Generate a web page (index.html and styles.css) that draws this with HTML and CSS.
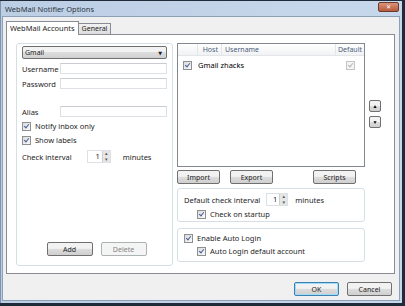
FILE: index.html
```html
<!DOCTYPE html>
<html lang="en">
<head>
  <meta charset="UTF-8">
  <title>WebMail Notifier Options</title>
  <link rel="stylesheet" href="styles.css">
</head>
<body>
  <div class="window">
    <div class="titlebar">
      <span class="title">WebMail Notifier Options</span>
      <span class="close">&#x2715;</span>
    </div>
    <div class="client">
      <div class="tabs">
        <span class="tab active">WebMail Accounts</span>
        <span class="tab">General</span>
      </div>
      <div class="panel">
        <!-- account editor -->
        <div class="group left">
          <div class="combo"><span>Gmail</span><span class="arrow">&#9660;</span></div>
          <div class="field"><label>Username</label><span class="input"></span></div>
          <div class="field"><label>Password</label><span class="input"></span></div>
          <div class="field alias"><label>Alias</label><span class="input"></span></div>
          <div class="check"><span class="cb on"></span>Notify inbox only</div>
          <div class="check"><span class="cb on"></span>Show labels</div>
          <div class="interval">
            <span>Check interval</span>
            <span class="spin"><span class="val">1</span><span class="arrows"><i>&#9652;</i><i>&#9662;</i></span></span>
            <span>minutes</span>
          </div>
          <div class="left-buttons">
            <button class="btn">Add</button>
            <button class="btn disabled">Delete</button>
          </div>
        </div>

        <!-- account list -->
        <div class="right">
          <div class="list-row">
            <div class="list">
              <div class="head">
                <span class="c0"></span>
                <span class="c1">Host</span>
                <span class="c2">Username</span>
                <span class="c3">Default</span>
              </div>
              <div class="item">
                <span class="c0"><span class="cb on"></span></span>
                <span class="name">Gmail zhacks</span>
                <span class="c3"><span class="cb on grey"></span></span>
              </div>
            </div>
            <div class="movers">
              <button class="mv">&#9650;</button>
              <button class="mv">&#9660;</button>
            </div>
          </div>
          <div class="io">
            <button class="btn">Import</button>
            <button class="btn">Export</button>
            <button class="btn scripts">Scripts</button>
          </div>
          <div class="group box">
            <div class="interval">
              <span>Default check interval</span>
              <span class="spin"><span class="val">1</span><span class="arrows"><i>&#9652;</i><i>&#9662;</i></span></span>
              <span>minutes</span>
            </div>
            <div class="check sub"><span class="cb on"></span>Check on startup</div>
          </div>
          <div class="group box">
            <div class="check"><span class="cb on"></span>Enable Auto Login</div>
            <div class="check sub"><span class="cb on"></span>Auto Login default account</div>
          </div>
        </div>
      </div>
      <div class="footer">
        <button class="btn ok">OK</button>
        <button class="btn">Cancel</button>
      </div>
    </div>
  </div>
</body>
</html>
```

FILE: styles.css
```css
body {
  margin: 0;
  background: #1f2b3b;
  font-family: 'Noto Sans', 'DejaVu Sans', sans-serif;
  font-size: 7.5px;
  color: #1e1e1e;
}
.window {
  width: 401px;
  height: 302px;
  margin-top: 1px;
  background: linear-gradient(to right, #bccee4, #c8d8ec);
  border-left: 1px solid #7f93ad;
  display: flex;
  flex-direction: column;
}
.titlebar {
  height: 14px;
  display: flex;
  align-items: center;
  justify-content: space-between;
  padding: 0 3px 0 4px;
}
.title {
  color: #2c3440;
  font-size: 7.5px;
  margin-top: 1px;
}
.close {
  width: 19px;
  height: 8px;
  margin-top: -3px;
  background: linear-gradient(#d9947a, #b85a3c);
  border: 1px solid #6d3a2c;
  border-radius: 2px;
  color: #fff;
  font-size: 6px;
  line-height: 8px;
  text-align: center;
}
.client {
  flex: 1;
  margin: 1px 2px 2px 1px;
  background: #f0f0f0;
  border: 1px solid #8ea0b8;
  padding: 4px 4px 0 3px;
  display: flex;
  flex-direction: column;
}
.tabs {
  display: flex;
  align-items: flex-end;
  height: 13px;
}
.tab {
  border: 1px solid #898c95;
  border-bottom: none;
  background: linear-gradient(#f2f2f2, #dcdcdc);
  padding: 0 3px;
  height: 10px;
  line-height: 10px;
  font-size: 7px;
  margin-left: -1px;
}
.tab.active {
  background: #fff;
  height: 13px;
  line-height: 12px;
  font-size: 7.5px;
  position: relative;
  z-index: 1;
  margin-left: 0;
  margin-bottom: -1px;
}
.panel {
  height: 223px;
  background: #fff;
  border: 1px solid #898c95;
  padding: 8px 29px 7px 9px;
  display: flex;
  gap: 4px;
}
.group {
  border: 1px solid #d5dfe5;
  border-radius: 3px;
}
.left {
  width: 145px;
  padding: 2px 5px 4px 5px;
  display: flex;
  flex-direction: column;
}
.combo {
  height: 11px;
  flex: none;
  border: 1px solid #707070;
  border-radius: 2px;
  background: linear-gradient(#f2f2f2 45%, #dddddd 50%, #d0d0d0);
  display: flex;
  justify-content: space-between;
  align-items: center;
  padding: 0 4px 0 2px;
  font-size: 7px;
}
.combo .arrow {
  font-size: 5px;
}
.field {
  display: flex;
  align-items: center;
  height: 11px;
  margin-top: 4px;
}
.field label {
  width: 38px;
}
.input {
  flex: 1;
  height: 9px;
  border: 1px solid #dde1e6;
  border-top-color: #c9ccd2;
}
.alias {
  margin-top: 17px;
}
.check {
  display: flex;
  align-items: center;
  gap: 4px;
  margin-top: 4px;
  height: 10px;
}
.cb {
  width: 7px;
  height: 7px;
  border: 1px solid #8e8f8f;
  background: linear-gradient(135deg, #dcdcdc, #fafafa);
  position: relative;
  flex: none;
}
.cb.on::after {
  content: "";
  position: absolute;
  left: 2px;
  top: 0;
  width: 2px;
  height: 4px;
  border: solid #4a5f9a;
  border-width: 0 1.2px 1.2px 0;
  transform: rotate(40deg);
}
.cb.grey {
  border-color: #c4c4c4;
  background: #f4f4f4;
}
.cb.grey::after {
  border-color: #b5b5b5;
}
.interval {
  display: flex;
  align-items: center;
  margin-top: 5px;
}
.spin {
  display: flex;
  width: 22px;
  height: 11px;
  border: 1px solid #dde1e6;
  margin: 0 12px 0 15px;
}
.spin .val {
  flex: 1;
  text-align: right;
  padding-right: 2px;
  line-height: 11px;
}
.arrows {
  width: 7px;
  display: flex;
  flex-direction: column;
  background: #e6e6e6;
  border-left: 1px solid #cfcfcf;
}
.arrows i {
  flex: 1;
  font-style: normal;
  font-size: 5px;
  line-height: 5px;
  text-align: center;
  color: #555;
}
.left-buttons {
  margin-top: auto;
  display: flex;
  justify-content: center;
  gap: 8px;
  padding-left: 4px;
  margin-bottom: 5px;
}
.btn {
  font-family: inherit;
  font-size: 7px;
  height: 14px;
  width: 46px;
  padding: 0;
  border: 1px solid #707070;
  border-radius: 2px;
  background: linear-gradient(#f2f2f2 45%, #dddddd 50%, #cfcfcf);
  color: #1e1e1e;
}
.btn.disabled {
  border-color: #adb2b5;
  background: #f4f4f4;
  color: #838383;
}
.right {
  width: 188px;
  display: flex;
  flex-direction: column;
}
.list-row {
  display: flex;
  width: 218px;
}
.list {
  width: 186px;
  height: 122px;
  border: 1px solid #828790;
  flex: none;
}
.head {
  display: flex;
  height: 11px;
  line-height: 11px;
  background: linear-gradient(#ffffff, #f1f2f4);
  border-bottom: 1px solid #e3e5e8;
  color: #4c607a;
  font-size: 7px;
}
.head span {
  border-right: 1px solid #e3e5e8;
}
.c0 {
  width: 19px;
  display: flex;
  align-items: center;
  justify-content: center;
}
.c1 {
  width: 20px;
  text-align: right;
  padding-right: 3px;
}
.c2 {
  width: 110px;
  padding-left: 3px;
}
.c3 {
  flex: 1;
  display: flex;
  justify-content: center;
  align-items: center;
  border-right: none !important;
}
.item {
  display: flex;
  height: 12px;
  align-items: center;
  margin-top: 3px;
}
.name {
  width: 138px;
  padding-left: 1px;
  color: #000;
}
.movers {
  display: flex;
  flex-direction: column;
  gap: 4px;
  margin: 57px 0 0 4px;
}
.mv {
  width: 12px;
  height: 12px;
  padding: 0;
  border: 1px solid #707070;
  border-radius: 2px;
  background: linear-gradient(#f2f2f2 45%, #dddddd 50%, #cfcfcf);
  font-size: 5px;
  line-height: 10px;
  color: #000;
}
.io {
  display: flex;
  gap: 10px;
  margin-top: 3px;
}
.io .btn {
  width: 43px;
}
.io .scripts {
  margin-left: 30px;
}
.box {
  margin-top: 4px;
  height: 32px;
  padding: 0 6px;
}
.box + .box {
  margin-top: 6px;
}
.box .interval {
  margin-top: 4px;
}
.box .interval .spin {
  margin: 0 7px 0 6px;
  width: 20px;
}
.check.sub {
  margin-left: 13px;
  margin-top: 3px;
}
.box .check:first-child {
  margin-top: 4px;
}
.footer {
  display: flex;
  justify-content: flex-end;
  gap: 8px;
  padding: 8px 3px 0 0;
}
.footer .btn {
  width: 45px;
}
.footer .ok {
  border-color: #3c7fb1;
  box-shadow: inset 0 0 0 1px #9fdcf7;
}
```
